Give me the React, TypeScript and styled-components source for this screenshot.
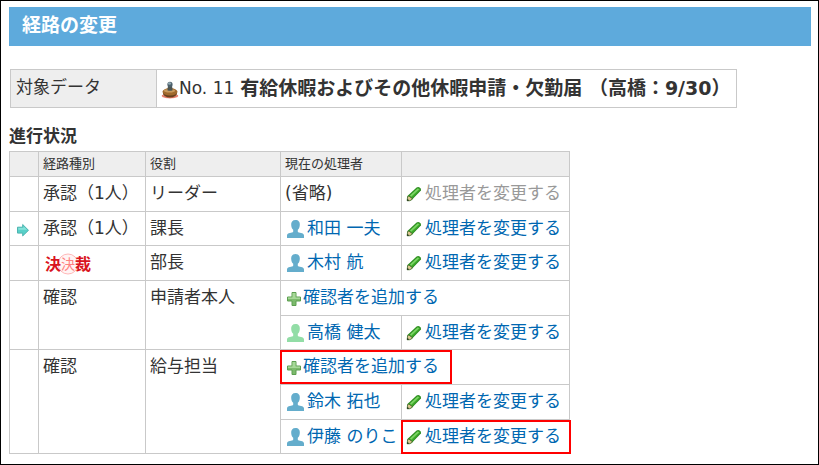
import React from "react";
import styled, { createGlobalStyle } from "styled-components";

const GlobalStyle = createGlobalStyle`
  *, *::before, *::after { box-sizing: border-box; }
  body {
    margin: 0;
    background: #fff;
    color: #333;
    font-family: "DejaVu Sans", "Noto Sans CJK JP", sans-serif;
    font-size: 17px;
    line-height: 24px;
  }
`;

const Page = styled.main`
  min-height: 100vh;
  padding: 6px 7px 10px 8px;
  border: 1px solid #000;
`;

const TitleBar = styled.h1`
  margin: 0 0 23px;
  padding: 4px 13px 7px;
  background: #5eaadc;
  color: #fff;
  font-size: 19px;
  font-weight: 700;
  line-height: 28px;
`;

const TargetTable = styled.table`
  margin-left: 1px;
  border-collapse: collapse;
  th, td {
    height: 38px;
    border: 1px solid #c9c9c9;
    text-align: left;
    white-space: nowrap;
  }
  th {
    width: 146px;
    padding: 0 5px 4px;
    background: #eee;
    font-weight: 400;
  }
  td { padding: 0 6px 2px 4px; }
`;

const Subject = styled.div`
  display: flex;
  align-items: center;
  svg { margin-top: 4px; }
`;

const SubjectName = styled.strong`
  margin-left: 6px;
  font-size: 19px;
`;

const SectionTitle = styled.h2`
  margin: 16px 0 3px;
  font-size: 17px;
  font-weight: 700;
`;

const RouteTable = styled.table`
  width: 561px;
  table-layout: fixed;
  border-collapse: collapse;
`;

const HeadCell = styled.th`
  height: 25px;
  padding: 0 4px;
  border: 1px solid #c9c9c9;
  background: #eee;
  font-size: 13px;
  font-weight: 400;
  line-height: 20px;
  text-align: left;
`;

const Row = styled.tr<{ $short?: boolean }>`
  height: ${(p) => (p.$short ? 34 : 35)}px;
`;

const Cell = styled.td`
  position: relative;
  padding: 4px 4px 0;
  border: 1px solid #c9c9c9;
  vertical-align: top;
  white-space: nowrap;
`;

const IconSlot = styled.span`
  display: flex;
  padding: 6px 0 0 1px;
`;

const Action = styled.a<{ $gap?: number }>`
  display: inline-flex;
  align-items: center;
  gap: ${(p) => p.$gap ?? 3}px;
  color: #0067b1;
  text-decoration: none;
  vertical-align: top;
  svg { flex: none; margin-top: 2px; }
`;

const DisabledAction = styled(Action).attrs({ as: "span" })`
  color: #999;
`;

const Highlight = styled.span<{ $width: number }>`
  position: absolute;
  top: 0;
  left: -1px;
  width: ${(p) => p.$width}px;
  height: 34px;
  border: 2px solid #f00;
  pointer-events: none;
`;

const Pencil = () => (
  <svg width="16" height="16" viewBox="0 0 16 16" aria-hidden="true">
    <path d="M1.3 11 2 9.4 10.6 1.6Q12 .7 13.6 1.4 15.6 2.6 14.9 4.4L6.4 13.2 4.6 14.6Z" fill="#2c8a20" />
    <path d="M3 9.9 11.2 2.2Q13.6 1.7 14.2 3.8L6 12.4Z" fill="#3fac2b" />
    <path d="M4 9.4 11.6 2.4 13.2 3.2 5.2 10.8Z" fill="#7dd566" />
    <path d="m1.2 14.8.4-4.3 1.5-.5 1.1 1.2 1.7.6.2 1.6-2.3 1.3Z" fill="#d9c690" stroke="#3c6a24" strokeWidth=".8" />
    <path d="m1 15 .3-2.3 2 1.9Z" fill="#25381d" />
  </svg>
);

const Person = ({ color = "#64adcc" }: { color?: string }) => (
  <svg width="17" height="18" viewBox="0 0 17 18" aria-hidden="true">
    <path d="M8.5 0C5.5 0 3.9 2 4.2 5c.1 2.4.9 3.8 2 4.8v2C5.700 13.200 0 12.600 0 15.400V18h17v-2.600c0-2.800-5.700-2.200-6.200-3.600v-2c1.100-1 1.900-2.400 2-4.800.3-3-1.300-5-4.300-5Z" fill={color} />
  </svg>
);

const Plus = () => (
  <svg width="16" height="16" viewBox="0 0 16 16" aria-hidden="true">
    <path d="M6 1.500h4v4.500h4.500v4h-4.500v4.500h-4v-4.500H1.500v-4H6Z" fill="#7cba6c" stroke="#5d9f50" strokeLinejoin="round" />
    <path d="M6.500 2h3v4.500H14V8H2V6.500h4.500Z" fill="#a6d898" />
  </svg>
);

const Arrow = () => (
  <svg width="16" height="16" viewBox="0 0 16 16" aria-hidden="true">
    <path d="M2.500 5.200h5.200V2.500L13.500 8.300l-5.800 5.600v-2.800H2.500Z" fill="#58d0c8" stroke="#4fb4b1" strokeLinejoin="round" />
    <path d="M3.300 6h5.200V4.400l3.600 3.400H3.300Z" fill="#86e3da" />
  </svg>
);

const Stamp = () => (
  <svg width="18" height="18" viewBox="0 0 18 18" aria-hidden="true">
    <ellipse cx="9" cy="15" rx="8.4" ry="2.3" fill="#f3a394" />
    <path d="M1 14.6Q9 19 17 14.6" fill="none" stroke="#df705b" />
    <ellipse cx="9" cy="12.400" rx="7" ry="4.100" fill="#68401c" />
    <ellipse cx="9" cy="10.800" rx="7.500" ry="3.700" fill="#a0692c" />
    <ellipse cx="8.500" cy="9.700" rx="5.600" ry="1.800" fill="#c99a5c" />
    <path d="M7 4.500h4l.6 4.700Q9 10.400 6.400 9.200Z" fill="#4c5552" />
    <ellipse cx="9" cy="3.400" rx="2.600" ry="2.600" fill="#4b5f6a" />
    <ellipse cx="8.500" cy="2.500" rx="1.600" ry="1.200" fill="#91a9b2" />
  </svg>
);

const ApprovalMark = () => (
  <svg width="50" height="28" viewBox="0 0 50 28" role="img" aria-label="決裁">
    <circle cx="25" cy="14" r="10" fill="#fff4f4" stroke="#ffb8b8" />
    <g fontFamily='"Noto Sans CJK JP", sans-serif' fontWeight="700" fill="#d91420">
      <text x="2" y="20" fontSize="16">決</text>
      <text x="18" y="19" fontSize="14" fontWeight="400" fill="#ff8080">決</text>
      <text x="32" y="20" fontSize="16">裁</text>
    </g>
  </svg>
);

const MarkSlot = styled.span`
  display: flex;
`;

const ChangeLink = () => (
  <Action href="#change"><Pencil />処理者を変更する</Action>
);

const PlusSlot = styled.span`
  display: flex;
  padding: 2px 0 0 1px;
`;

const AddLink = () => (
  <Action href="#add" $gap={1}><PlusSlot><Plus /></PlusSlot>確認者を追加する</Action>
);

const PersonSlot = styled.span`
  display: flex;
  padding-left: 2px;
`;

const UserLink = ({ name, color }: { name: string; color?: string }) => (
  <Action href="#user"><PersonSlot><Person color={color} /></PersonSlot>{name}</Action>
);

export default function App() {
  return (
    <>
      <GlobalStyle />
      <Page>
        <TitleBar>経路の変更</TitleBar>
        <TargetTable>
          <tbody>
            <tr>
              <th scope="row">対象データ</th>
              <td>
                <Subject>
                  <Stamp />
                  <span>No. 11</span>
                  <SubjectName>有給休暇およびその他休暇申請・欠勤届 （高橋：9/30）</SubjectName>
                </Subject>
              </td>
            </tr>
          </tbody>
        </TargetTable>
        <SectionTitle id="progress">進行状況</SectionTitle>
        <RouteTable aria-labelledby="progress">
          <colgroup>
            <col width="29" />
            <col width="107" />
            <col width="135" />
            <col width="121" />
            <col width="168" />
          </colgroup>
          <thead>
            <tr>
              <HeadCell />
              <HeadCell scope="col">経路種別</HeadCell>
              <HeadCell scope="col">役割</HeadCell>
              <HeadCell scope="col">現在の処理者</HeadCell>
              <HeadCell />
            </tr>
          </thead>
          <tbody>
            <Row>
              <Cell />
              <Cell>承認（1人）</Cell>
              <Cell>リーダー</Cell>
              <Cell>(省略)</Cell>
              <Cell><DisabledAction><Pencil />処理者を変更する</DisabledAction></Cell>
            </Row>
            <Row $short>
              <Cell><IconSlot><Arrow /></IconSlot></Cell>
              <Cell>承認（1人）</Cell>
              <Cell>課長</Cell>
              <Cell><UserLink name="和田 一夫" /></Cell>
              <Cell><ChangeLink /></Cell>
            </Row>
            <Row>
              <Cell />
              <Cell><MarkSlot><ApprovalMark /></MarkSlot></Cell>
              <Cell>部長</Cell>
              <Cell><UserLink name="木村 航" /></Cell>
              <Cell><ChangeLink /></Cell>
            </Row>
            <Row>
              <Cell rowSpan={2} />
              <Cell rowSpan={2}>確認</Cell>
              <Cell rowSpan={2}>申請者本人</Cell>
              <Cell colSpan={2}><AddLink /></Cell>
            </Row>
            <Row $short>
              <Cell><UserLink name="高橋 健太" color="#92dda6" /></Cell>
              <Cell><ChangeLink /></Cell>
            </Row>
            <Row>
              <Cell rowSpan={3} />
              <Cell rowSpan={3}>確認</Cell>
              <Cell rowSpan={3}>給与担当</Cell>
              <Cell colSpan={2}><AddLink /><Highlight $width={172} /></Cell>
            </Row>
            <Row>
              <Cell><UserLink name="鈴木 拓也" /></Cell>
              <Cell><ChangeLink /></Cell>
            </Row>
            <Row $short>
              <Cell><UserLink name="伊藤 のりこ" /></Cell>
              <Cell><ChangeLink /><Highlight $width={170} /></Cell>
            </Row>
          </tbody>
        </RouteTable>
      </Page>
    </>
  );
}
